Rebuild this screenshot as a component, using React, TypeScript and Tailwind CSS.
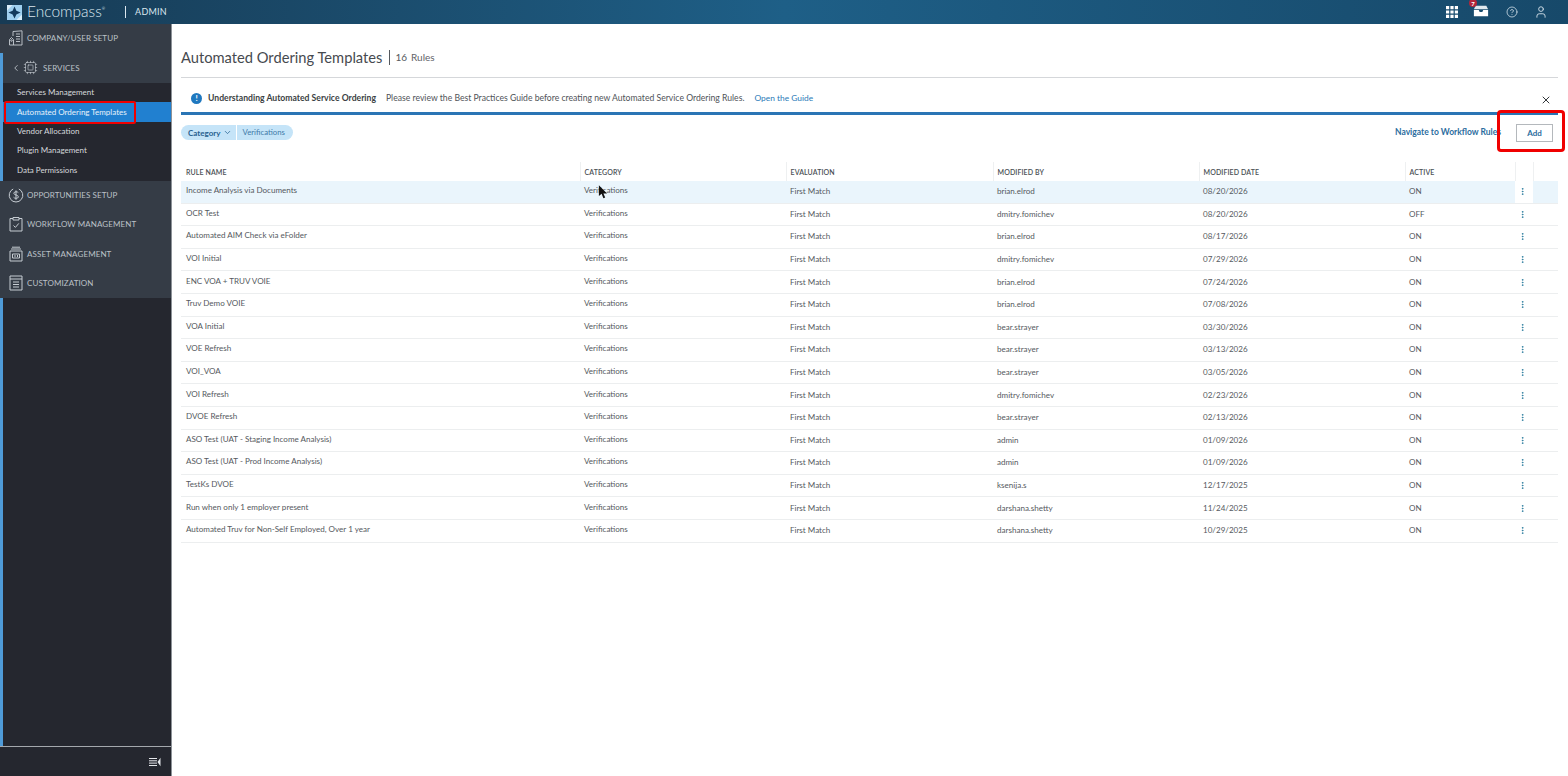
import { ChevronDown, ChevronLeft, CircleHelp, Cpu, EllipsisVertical, User, X } from "lucide-react";

const rules = [
  ["Income Analysis via Documents", "brian.elrod", "08/20/2026", "ON"],
  ["OCR Test", "dmitry.fomichev", "08/20/2026", "OFF"],
  ["Automated AIM Check via eFolder", "brian.elrod", "08/17/2026", "ON"],
  ["VOI Initial", "dmitry.fomichev", "07/29/2026", "ON"],
  ["ENC VOA + TRUV VOIE", "brian.elrod", "07/24/2026", "ON"],
  ["Truv Demo VOIE", "brian.elrod", "07/08/2026", "ON"],
  ["VOA Initial", "bear.strayer", "03/30/2026", "ON"],
  ["VOE Refresh", "bear.strayer", "03/13/2026", "ON"],
  ["VOI_VOA", "bear.strayer", "03/05/2026", "ON"],
  ["VOI Refresh", "dmitry.fomichev", "02/23/2026", "ON"],
  ["DVOE Refresh", "bear.strayer", "02/13/2026", "ON"],
  ["ASO Test (UAT - Staging Income Analysis)", "admin", "01/09/2026", "ON"],
  ["ASO Test (UAT - Prod Income Analysis)", "admin", "01/09/2026", "ON"],
  ["TestKs DVOE", "ksenija.s", "12/17/2025", "ON"],
  ["Run when only 1 employer present", "darshana.shetty", "11/24/2025", "ON"],
  ["Automated Truv for Non-Self Employed, Over 1 year", "darshana.shetty", "10/29/2025", "ON"],
];

const subItems = ["Services Management", "Automated Ordering Templates", "Vendor Allocation", "Plugin Management", "Data Permissions"];

function Logo() {
  return (
    <svg viewBox="0 0 16 16" className="h-[15px] w-[15px]">
      <rect width="16" height="16" fill="#9fd0f0" />
      <path d="M8 1.5 10 6 14.5 8 10 10 8 14.5 6 10 1.5 8 6 6Z" fill="#123a5c" />
      <path d="M0 0H6L0 6ZM16 16H10L16 10Z" fill="#d9eefb" />
    </svg>
  );
}

function AppsIcon() {
  return (
    <svg viewBox="0 0 12 12" className="h-[12px] w-[12px]" fill="#ffffff">
      <path d="M0 0H3.2V3.2H0ZM4.4 0H7.6V3.2H4.4ZM8.8 0H12V3.2H8.8ZM0 4.4H3.2V7.6H0ZM4.4 4.4H7.6V7.6H4.4ZM8.8 4.4H12V7.6H8.8ZM0 8.8H3.2V12H0ZM4.4 8.8H7.6V12H4.4ZM8.8 8.8H12V12H8.8Z" />
    </svg>
  );
}

function CompanyIcon() {
  return (
    <svg viewBox="0 0 16 16" className="h-[16px] w-[16px]" fill="none" stroke="#c6ccd2" strokeWidth="0.9">
      <path d="M5 6V1.5L14 .8V15H1.5V9.5L3.5 7.5 5.5 9.5V15M8 4h4M8 6.5h4M8 9h4M8 11.5h4" />
      <circle cx="3.5" cy="10.5" r="0.8" />
    </svg>
  );
}

function DollarIcon() {
  return (
    <svg viewBox="0 0 16 16" className="h-[16px] w-[16px]" fill="none" stroke="#c6ccd2" strokeWidth="1">
      <path d="M5.2 2A6.8 6.8 0 1 0 10.8 2" />
      <path d="M10.3 5.6C9.8 4.6 6 4.2 5.8 6.2 5.7 8.4 10.5 7.6 10.4 9.9 10.2 12 6.2 11.5 5.6 10.3M8 3.4V12.8" />
    </svg>
  );
}

function ClipboardIcon() {
  return (
    <svg viewBox="0 0 16 16" className="h-[16px] w-[16px]" fill="none" stroke="#c6ccd2" strokeWidth="1">
      <path d="M5 2.5H2V15H14V2.5H11M5 1.5H11V4H5ZM5.5 9.5 7.4 11.4 10.8 7.4" />
    </svg>
  );
}

function AssetIcon() {
  return (
    <svg viewBox="0 0 16 16" className="h-[16px] w-[16px]" fill="none" stroke="#c6ccd2" strokeWidth="1">
      <path d="M2 5H14V15H2ZM3 3H13M4 1.2H12M4.5 8H11.5V12H4.5ZM6 10H8M9.5 9V11" />
    </svg>
  );
}

function ListIcon() {
  return (
    <svg viewBox="0 0 16 16" className="h-[16px] w-[16px]" fill="none" stroke="#c6ccd2" strokeWidth="1">
      <path d="M2 1H14V15H2ZM2 4H14M5 7H11M5 9.5H11M5 12H11" />
    </svg>
  );
}

function InboxIcon() {
  return (
    <svg viewBox="0 0 18 14" className="h-[14px] w-[16px]">
      <path d="M3 1H15L17 5H1Z" fill="#dfe8ee" />
      <path d="M1 6H6.5L7.5 8H10.5L11.5 6H17V13H1Z" fill="#ffffff" />
    </svg>
  );
}

function CollapseIcon() {
  return (
    <svg viewBox="0 0 12 10" className="h-[10px] w-[12px]" fill="none" stroke="#e5e7eb" strokeWidth="1">
      <path d="M0 1.5H8M0 3.8H8M0 6.1H8M0 8.5H8" />
      <path d="M11.5 .8V9.2L8.5 5Z" fill="#e5e7eb" stroke="none" />
    </svg>
  );
}

function GroupRow({ icon, label }: { icon: React.ReactNode; label: string }) {
  return (
    <div className="flex h-[29.3px] items-center bg-[#353c46] pb-[1px] pl-[6px]">
      <span className="flex w-[20px] justify-center">{icon}</span>
      <span className="ml-[1px] text-[8px] tracking-[0.1px] text-[#bcc1c7]">{label}</span>
    </div>
  );
}

export default function App() {
  return (
    <div className="flex h-[776px] w-[1568px] flex-col overflow-hidden bg-white font-['Lato',sans-serif] text-[#55595e]">
      <header className="flex h-[24px] shrink-0 items-center bg-gradient-to-r from-[#173b55] via-[#1e5f87] to-[#17496a] pl-[7px]">
        <Logo />
        <span className="ml-[5px] text-[15.5px] font-light leading-none text-[#dbe7ef]">Encompass</span>
        <span className="mb-[6px] text-[4px] text-[#dbe7ef]">®</span>
        <span className="ml-[20px] h-[12px] w-px bg-[#dbe7ef]" />
        <span className="ml-[9px] text-[9px] tracking-[0.2px] text-[#dbe7ef]">ADMIN</span>
        <div className="relative ml-auto flex items-center">
          <AppsIcon />
          <span className="ml-[15px] mt-[-2px]"><InboxIcon /></span>
          <span className="absolute left-[23px] top-[-6px] flex h-[8px] w-[8px] items-center justify-center rounded-full bg-[#b3263a] text-[6px] font-bold text-white">7</span>
          <CircleHelp className="ml-[17px] h-[12px] w-[12px] text-[#dbe7ef]" strokeWidth={1.5} />
          <User className="ml-[16px] mr-[20px] h-[14px] w-[14px] text-[#dbe7ef]" strokeWidth={1.5} />
        </div>
      </header>

      <div className="flex min-h-0 flex-1">
        <aside className="flex w-[172px] shrink-0 flex-col border-r border-[#8d9298] bg-[#25272f]">
          <div className="flex h-[29px] items-center bg-[#353c46] pb-[1px] pl-[6px]">
            <span className="flex w-[20px] justify-center"><CompanyIcon /></span>
            <span className="ml-[1px] text-[8px] tracking-[0.1px] text-[#bcc1c7]">COMPANY/USER SETUP</span>
          </div>
          <div className="flex h-[30px] items-center border-l-[3px] border-[#4f9bd8] bg-[#353c46] pb-[1px] pl-[8px]">
            <ChevronLeft className="h-[10px] w-[10px] text-[#c6ccd2]" />
            <Cpu className="ml-[2px] h-[15px] w-[15px] text-[#c6ccd2]" strokeWidth={1} />
            <span className="ml-[5px] text-[8px] tracking-[0.1px] text-[#bcc1c7]">SERVICES</span>
          </div>
          <nav className="flex h-[98px] flex-col border-l-[3px] border-[#4f9bd8] pb-[1px]">
            {subItems.map((item, i) => (
              <div
                key={item}
                className={`flex h-[19.6px] items-center pb-[1px] pl-[14px] text-[8px] ${i === 1 ? "relative bg-[#2180d0] text-[#e8f2fa]" : "text-[#d5d8dc]"}`}
              >
                {item}
                {i === 1 && <span className="absolute left-[1px] top-[-1px] h-[23px] w-[132px] rounded-[2px] border-2 border-[#f00000]" />}
              </div>
            ))}
          </nav>
          <GroupRow icon={<DollarIcon />} label="OPPORTUNITIES SETUP" />
          <GroupRow icon={<ClipboardIcon />} label="WORKFLOW MANAGEMENT" />
          <GroupRow icon={<AssetIcon />} label="ASSET MANAGEMENT" />
          <GroupRow icon={<ListIcon />} label="CUSTOMIZATION" />
          <div className="flex-1 border-l-[3px] border-[#4f9bd8]" />
          <div className="flex h-[30px] items-center justify-end border-t border-[#a4a8ad] pr-[10px]">
            <CollapseIcon />
          </div>
        </aside>

        <main className="min-w-0 flex-1 pl-[9px] pr-[10px]">
          <div className="flex h-[54px] items-center border-b border-[#d5d7da] pt-[13px]">
            <h1 className="text-[14.7px] leading-none text-[#464a4f]">Automated Ordering Templates</h1>
            <span className="ml-[7px] h-[15px] w-px bg-[#55595e]" />
            <span className="ml-[5px] text-[10px]">16</span>
            <span className="ml-[4px] text-[10px] text-[#5f6469]">Rules</span>
          </div>

          <div className="relative flex h-[37px] items-center border-b-[3px] border-[#2a75b5] pl-[10px] pt-[6px] text-[8.65px]">
            <span className="flex h-[11px] w-[11px] items-center justify-center rounded-full bg-[#1f78bf] text-[8px] font-bold text-white">!</span>
            <span className="ml-[6px] font-bold text-[#3b3f44]">Understanding Automated Service Ordering</span>
            <span className="ml-[10px] text-[#4f5358]">Please review the Best Practices Guide before creating new Automated Service Ordering Rules.</span>
            <span className="ml-[10px] text-[8.4px] text-[#2a7ab8]">Open the Guide</span>
            <X className="absolute right-[6px] top-[16px] h-[12px] w-[12px] text-[#33373b]" />
          </div>

          <div className="relative flex h-[35px] items-center">
            <div className="flex h-[15px] items-center rounded-l-full bg-[#c5e4f8] pl-[7px] pr-[4px] text-[8px] font-bold text-[#25608f]">
              Category
              <ChevronDown className="ml-[3px] h-[9px] w-[9px]" />
            </div>
            <div className="ml-px flex h-[15px] items-center rounded-r-full bg-[#c5e4f8] pl-[5px] pr-[8px] text-[7.8px] text-[#3f7aa8]">
              Verifications
            </div>
            <span className="ml-auto mr-[15px] text-[8.5px] font-bold text-[#2c6d9e]">Navigate to Workflow Rules</span>
            <button className="mr-[5px] flex h-[18px] w-[37px] items-center justify-center border border-[#b4b8bc] text-[8px] font-bold text-[#2c6d9e]">
              Add
            </button>
            <span className="absolute right-[-7px] top-[-5px] h-[42px] w-[68px] rounded-[4px] border-[3px] border-[#f00000]" />
          </div>

          <table className="mt-[12px] w-full table-fixed border-collapse text-[8.05px]">
            <colgroup>
              <col className="w-[399px]" />
              <col className="w-[206px]" />
              <col className="w-[207px]" />
              <col className="w-[206px]" />
              <col className="w-[206px]" />
              <col className="w-[110px]" />
              <col className="w-[18px]" />
              <col />
            </colgroup>
            <thead>
              <tr className="h-[18.5px] text-left text-[7px] text-[#4a4f55]">
                {["RULE NAME", "CATEGORY", "EVALUATION", "MODIFIED BY", "MODIFIED DATE", "ACTIVE"].map((h, i) => (
                  <th key={h} className={`border-r border-[#eef0f1] pt-[2px] font-semibold tracking-[0.1px] last:border-r-0 ${i === 0 ? "pl-[5px]" : "pl-[4px]"}`}>{h}</th>
                ))}
                <th className="border-x border-[#eef0f1]" />
                <th />
              </tr>
            </thead>
            <tbody>
              {rules.map(([name, by, date, active], i) => (
                <tr key={name} className={`h-[22.6px] border-b border-[#eceeef] ${i === 0 ? "bg-[#eaf5fc]" : ""}`}>
                  <td className="truncate pb-[3px] pl-[5px]">{name}</td>
                  <td className="relative pb-[3px] pl-[4px]">
                    Verifications
                    {i === 0 && (
                      <svg viewBox="0 0 10 16" className="absolute left-[18px] top-[4px] h-[15px] w-[9px]">
                        <path d="M1 0V12L4 9.5 6 14.5 8 13.5 6 9H10Z" fill="#111" />
                      </svg>
                    )}
                  </td>
                  <td className="pb-[1px] pl-[4px]">First Match</td>
                  <td className="pb-[1px] pl-[4px]">{by}</td>
                  <td className="pb-[1px] pl-[4px]">{date}</td>
                  <td className="pb-[1px] pl-[4px]">{active}</td>
                  <td className="bg-white pr-[3px] text-center">
                    <EllipsisVertical className="mx-auto h-[9px] w-[9px] text-[#2c7d9e]" strokeWidth={2.5} />
                  </td>
                  <td />
                </tr>
              ))}
            </tbody>
          </table>
        </main>
      </div>
    </div>
  );
}
